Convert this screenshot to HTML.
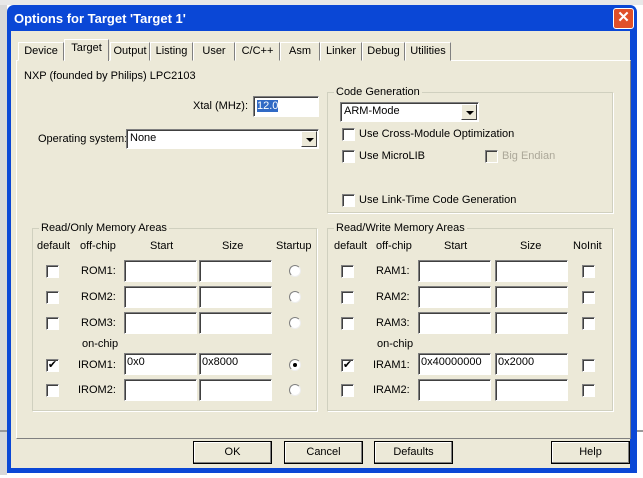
<!DOCTYPE html><html><head><style>
*{margin:0;padding:0;box-sizing:border-box}
body{width:643px;height:478px;overflow:hidden;background:#fff;font-family:"Liberation Sans",sans-serif;font-size:11px;color:#000;position:relative}
.a{position:absolute;white-space:nowrap}
.win{position:absolute;left:7px;top:5px;width:630px;height:468px;background:#0a47d6;border-radius:7px 7px 0 0}
.body{position:absolute;left:11px;top:31px;width:619px;height:437px;background:#ece9d8}
.inp{position:absolute;background:#fff;border:1px solid;border-color:#7f7f7f #fff #fff #7f7f7f;box-shadow:inset 1px 1px 0 #404040}
.cb{position:absolute;width:13px;height:13px;background:#fff;border:1px solid;border-color:#808080 #fff #fff #808080;box-shadow:inset 1px 1px 0 #404040}
.rd{position:absolute;width:12px;height:12px;border-radius:50%;background:#fff;border:1px solid;border-color:#808080 #eee #eee #808080}
.grp{position:absolute;border:1px solid #d0d0bf;box-shadow:1px 1px 0 #fff}
.gl{position:absolute;top:-7px;left:6px;background:#ece9d8;padding:0 2px}
.btn{position:absolute;height:23px;border:1px solid #000;background:#ece9d8;box-shadow:inset -1px -1px 0 #808080,inset 1px 1px 0 #fff;text-align:center;line-height:21px}
.tab{position:absolute;top:42px;height:19px;border:1px solid;border-color:#fff #808080 transparent #fff;text-align:center;line-height:16px;background:#ece9d8}
.sel{position:absolute;background:#fff;border:1px solid;border-color:#7f7f7f #fff #fff #7f7f7f;box-shadow:inset 1px 1px 0 #404040;padding-left:3px;line-height:17px}
.arr{position:absolute;right:1px;top:1px;width:16px;bottom:1px;background:#ece9d8;border:1px solid;border-color:#fff #404040 #404040 #fff}
.arr:after{content:"";position:absolute;left:4px;top:6px;border:4px solid transparent;border-top:4px solid #000;border-bottom:0}
</style></head><body>
<div class="a" style="left:0;top:0;width:643px;height:5px;background:#e8e8e8"></div>
<div class="a" style="left:0;top:5px;width:7px;height:470px;background:#d8d8d8"></div>
<div class="a" style="left:0;top:430px;width:643px;height:2px;background:#999"></div>
<div class="win"></div>
<div class="a" style="left:14px;top:11px;color:#fff;font-weight:bold;font-size:13px">Options for Target 'Target 1'</div>
<div class="a" style="left:613px;top:8px;width:21px;height:21px;background:#e0502a;border:1px solid #fff;border-radius:3px;color:#fff;font-weight:bold;font-size:15px;text-align:center;line-height:18px">✕</div>
<div class="body"></div>
<div class="a" style="left:16px;top:60px;width:615px;height:379px;border:1px solid;border-color:#fff #808080 #808080 #fff"></div>
<div class="tab" style="left:18px;width:46px">Device</div>
<div class="tab" style="left:64px;width:45px;top:39px;height:22px;border-bottom:none;z-index:2">Target</div>
<div class="tab" style="left:110px;width:40px">Output</div>
<div class="tab" style="left:150px;width:43px">Listing</div>
<div class="tab" style="left:193px;width:42px">User</div>
<div class="tab" style="left:235px;width:45px">C/C++</div>
<div class="tab" style="left:280px;width:40px">Asm</div>
<div class="tab" style="left:320px;width:42px">Linker</div>
<div class="tab" style="left:362px;width:43px">Debug</div>
<div class="tab" style="left:405px;width:46px">Utilities</div>

<div class="a" style="left:24px;top:70px">NXP (founded by Philips) LPC2103</div>
<div class="a" style="left:193px;top:100px">Xtal (MHz):</div>
<div class="inp" style="left:253px;top:96px;width:66px;height:21px"><span style="background:#316ac5;color:#fff;margin:3px;display:inline-block;line-height:12px">12.0</span></div>
<div class="a" style="left:38px;top:133px">Operating system:</div>
<div class="sel" style="left:126px;top:129px;width:193px;height:20px">None<div class="arr"></div></div>

<div class="grp" style="left:327px;top:92px;width:286px;height:121px"><span class="gl">Code Generation</span></div>
<div class="sel" style="left:340px;top:102px;width:139px;height:20px">ARM-Mode<div class="arr"></div></div>
<div class="cb" style="left:342px;top:128px"></div><div class="a" style="left:359px;top:128px">Use Cross-Module Optimization</div>
<div class="cb" style="left:342px;top:150px"></div><div class="a" style="left:359px;top:150px">Use MicroLIB</div>
<div class="cb" style="left:485px;top:150px;background:#ece9d8"></div><div class="a" style="left:502px;top:150px;color:#aca899">Big Endian</div>
<div class="cb" style="left:342px;top:194px"></div><div class="a" style="left:359px;top:194px">Use Link-Time Code Generation</div>

<div class="grp" style="left:32px;top:228px;width:285px;height:183px"><span class="gl">Read/Only Memory Areas</span></div>
<div class="grp" style="left:327px;top:228px;width:286px;height:183px"><span class="gl">Read/Write Memory Areas</span></div>
<div class="a" style="left:37px;top:240px">default</div><div class="a" style="left:80px;top:240px">off-chip</div><div class="a" style="left:150px;top:240px">Start</div><div class="a" style="left:222px;top:240px">Size</div><div class="a" style="left:276px;top:240px">Startup</div>
<div class="a" style="left:334px;top:240px">default</div><div class="a" style="left:376px;top:240px">off-chip</div><div class="a" style="left:444px;top:240px">Start</div><div class="a" style="left:520px;top:240px">Size</div><div class="a" style="left:573px;top:240px">NoInit</div>
<div class="a" style="left:82px;top:338px">on-chip</div><div class="a" style="left:377px;top:338px">on-chip</div>

<div class="cb" style="left:46px;top:265px"></div><div class="a" style="left:81px;top:265px">ROM1:</div><div class="inp" style="left:124px;top:260px;width:73px;height:22px"></div><div class="inp" style="left:199px;top:260px;width:73px;height:22px"></div><div class="rd" style="left:289px;top:265px"></div>
<div class="cb" style="left:46px;top:291px"></div><div class="a" style="left:81px;top:291px">ROM2:</div><div class="inp" style="left:124px;top:286px;width:73px;height:22px"></div><div class="inp" style="left:199px;top:286px;width:73px;height:22px"></div><div class="rd" style="left:289px;top:291px"></div>
<div class="cb" style="left:46px;top:317px"></div><div class="a" style="left:81px;top:317px">ROM3:</div><div class="inp" style="left:124px;top:312px;width:73px;height:22px"></div><div class="inp" style="left:199px;top:312px;width:73px;height:22px"></div><div class="rd" style="left:289px;top:317px"></div>
<div class="cb" style="left:46px;top:359px;font-size:11px;line-height:10px;text-align:center">✔</div><div class="a" style="left:78px;top:359px">IROM1:</div><div class="inp" style="left:124px;top:353px;width:73px;height:22px;padding:2px">0x0</div><div class="inp" style="left:199px;top:353px;width:73px;height:22px;padding:2px">0x8000</div><div class="rd" style="left:289px;top:359px"><div style="position:absolute;left:3px;top:3px;width:4px;height:4px;background:#000;border-radius:50%"></div></div>
<div class="cb" style="left:46px;top:384px"></div><div class="a" style="left:78px;top:384px">IROM2:</div><div class="inp" style="left:124px;top:379px;width:73px;height:22px"></div><div class="inp" style="left:199px;top:379px;width:73px;height:22px"></div><div class="rd" style="left:289px;top:384px"></div>

<div class="cb" style="left:341px;top:265px"></div><div class="a" style="left:376px;top:265px">RAM1:</div><div class="inp" style="left:418px;top:260px;width:73px;height:22px"></div><div class="inp" style="left:495px;top:260px;width:73px;height:22px"></div><div class="cb" style="left:582px;top:265px"></div>
<div class="cb" style="left:341px;top:291px"></div><div class="a" style="left:376px;top:291px">RAM2:</div><div class="inp" style="left:418px;top:286px;width:73px;height:22px"></div><div class="inp" style="left:495px;top:286px;width:73px;height:22px"></div><div class="cb" style="left:582px;top:291px"></div>
<div class="cb" style="left:341px;top:317px"></div><div class="a" style="left:376px;top:317px">RAM3:</div><div class="inp" style="left:418px;top:312px;width:73px;height:22px"></div><div class="inp" style="left:495px;top:312px;width:73px;height:22px"></div><div class="cb" style="left:582px;top:317px"></div>
<div class="cb" style="left:341px;top:359px;line-height:10px;text-align:center">✔</div><div class="a" style="left:373px;top:359px">IRAM1:</div><div class="inp" style="left:418px;top:353px;width:73px;height:22px;padding:2px">0x40000000</div><div class="inp" style="left:495px;top:353px;width:73px;height:22px;padding:2px">0x2000</div><div class="cb" style="left:582px;top:359px"></div>
<div class="cb" style="left:341px;top:384px"></div><div class="a" style="left:373px;top:384px">IRAM2:</div><div class="inp" style="left:418px;top:379px;width:73px;height:22px"></div><div class="inp" style="left:495px;top:379px;width:73px;height:22px"></div><div class="cb" style="left:582px;top:384px"></div>

<div class="btn" style="left:193px;top:441px;width:79px">OK</div>
<div class="btn" style="left:284px;top:441px;width:79px">Cancel</div>
<div class="btn" style="left:374px;top:441px;width:79px">Defaults</div>
<div class="btn" style="left:551px;top:441px;width:79px">Help</div>
</body></html>
